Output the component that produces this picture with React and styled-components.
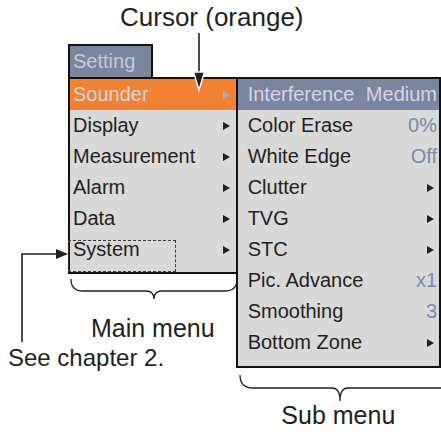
import React from "react";
import styled, { createGlobalStyle } from "styled-components";

const mainItems = ["Sounder", "Display", "Measurement", "Alarm", "Data", "System"];

const subItems = [
  { label: "Color Erase", value: "0%" },
  { label: "White Edge", value: "Off" },
  { label: "Clutter" },
  { label: "TVG" },
  { label: "STC" },
  { label: "Pic. Advance", value: "x1" },
  { label: "Smoothing", value: "3" },
  { label: "Bottom Zone" },
];

function App() {
  return (
    <>
      <GlobalStyle />
      <Canvas>
        <Caption>Cursor (orange)</Caption>
        <Menus>
          <MainColumn>
            <Tab>Setting</Tab>
            <MainMenu>
              {mainItems.map((item, i) => (
                <MainRow key={item} $active={i === 0} $marked={item === "System"}>
                  <span>{item}</span>
                  <Caret $light={i === 0} />
                </MainRow>
              ))}
            </MainMenu>
            <Label>Main menu</Label>
          </MainColumn>
          <SubColumn>
            <SubMenu>
              <SubHeader>
                <span>Interference</span>
                <span>Medium</span>
              </SubHeader>
              {subItems.map((item) => (
                <SubRow key={item.label}>
                  <span>{item.label}</span>
                  {item.value ? <Value>{item.value}</Value> : <Caret />}
                </SubRow>
              ))}
            </SubMenu>
            <Label>Sub menu</Label>
          </SubColumn>
        </Menus>
        <SeeNote>See chapter 2.</SeeNote>
        <Marks width="441" height="432" viewBox="0 0 441 432">
          <line x1="199" y1="33" x2="199" y2="76" stroke="#231f20" strokeWidth="1.6" />
          <polygon points="193.5,72 204.5,72 199,90" fill="#231f20" stroke="#fff" strokeWidth="1.4" />
          <polyline points="22,342 22,254 58,254" fill="none" stroke="#231f20" strokeWidth="1.6" />
          <polygon points="56,249 68,254 56,259" fill="#231f20" />
          <path
            d="M71 279 Q71 291 83 291 L146 291 Q154 291 154 299 Q154 291 162 291 L225 291 Q237 291 237 279"
            fill="none"
            stroke="#231f20"
            strokeWidth="1.3"
          />
          <path
            d="M240 375 Q240 388 253 388 L332 388 Q340 388 340 401 Q340 388 348 388 L441 388"
            fill="none"
            stroke="#231f20"
            strokeWidth="1.3"
          />
        </Marks>
      </Canvas>
    </>
  );
}

const GlobalStyle = createGlobalStyle`
  body {
    margin: 0;
    background: #fff;
    overflow: hidden;
  }
`;

const Canvas = styled.div`
  position: relative;
  width: 441px;
  height: 432px;
  overflow: hidden;
  font-family: "Liberation Sans", Arial, sans-serif;
  color: #231f20;
  padding-top: 5px;
  box-sizing: border-box;
`;

const Caption = styled.div`
  font-size: 26px;
  line-height: 25px;
  padding-left: 120px;
`;

const Menus = styled.div`
  display: flex;
  align-items: flex-start;
  margin-top: 14px;
  margin-left: 68px;
`;

const MainColumn = styled.div`
  display: flex;
  flex-direction: column;
  width: 171px;
`;

const Tab = styled.div`
  width: 85px;
  height: 33px;
  box-sizing: border-box;
  border: 2px solid #111;
  border-bottom: none;
  background: #7a869f;
  color: #c4c9d5;
  font-size: 20px;
  line-height: 31px;
  padding-left: 3px;
`;

const MainMenu = styled.div`
  border: 2px solid #111;
  background: #d9d9d9;
  padding-bottom: 7px;
`;

const MainRow = styled.div`
  display: flex;
  align-items: center;
  justify-content: space-between;
  height: 31px;
  padding: 0 6px 0 3px;
  font-size: 20px;
  background: ${({ $active }) => ($active ? "#f28233" : "transparent")};
  color: ${({ $active }) => ($active ? "#d2d6df" : "#231f20")};
  position: relative;

  ${({ $marked }) =>
    $marked &&
    `
    &::before {
      content: "";
      position: absolute;
      left: -2px;
      top: 6px;
      width: 106px;
      height: 30px;
      border: 1.5px dashed #3a3a3a;
    }
  `}
`;

const Caret = styled.i`
  width: 0;
  height: 0;
  border-top: 4px solid transparent;
  border-bottom: 4px solid transparent;
  border-left: 7px solid ${({ $light }) => ($light ? "#a4aec4" : "#231f20")};
`;

const Label = styled.div`
  font-size: 25px;
  line-height: 25px;
  text-align: center;
  margin-top: 42px;
`;

const SubColumn = styled.div`
  display: flex;
  flex-direction: column;
  margin-top: 33px;
  margin-left: -2px;
  width: 207px;

  ${Label} {
    margin-top: 35px;
  }
`;

const SubMenu = styled.div`
  border: 2px solid #111;
  background: #d9d9d9;
  padding-bottom: 8px;
`;

const SubHeader = styled.div`
  display: flex;
  justify-content: space-between;
  align-items: center;
  height: 31px;
  padding: 0 2px 0 10px;
  background: #7a869f;
  color: #d3d7e0;
  font-size: 20px;
`;

const SubRow = styled.div`
  display: flex;
  justify-content: space-between;
  align-items: center;
  height: 31px;
  padding: 0 5px 0 10px;
  font-size: 20px;
`;

const Value = styled.span`
  color: #7b8aa9;
  margin-right: -3px;
`;

const SeeNote = styled.div`
  position: absolute;
  left: 8px;
  top: 345px;
  font-size: 24px;
  line-height: 25px;
`;

const Marks = styled.svg`
  position: absolute;
  left: 0;
  top: 0;
  pointer-events: none;
`;

export default App;
